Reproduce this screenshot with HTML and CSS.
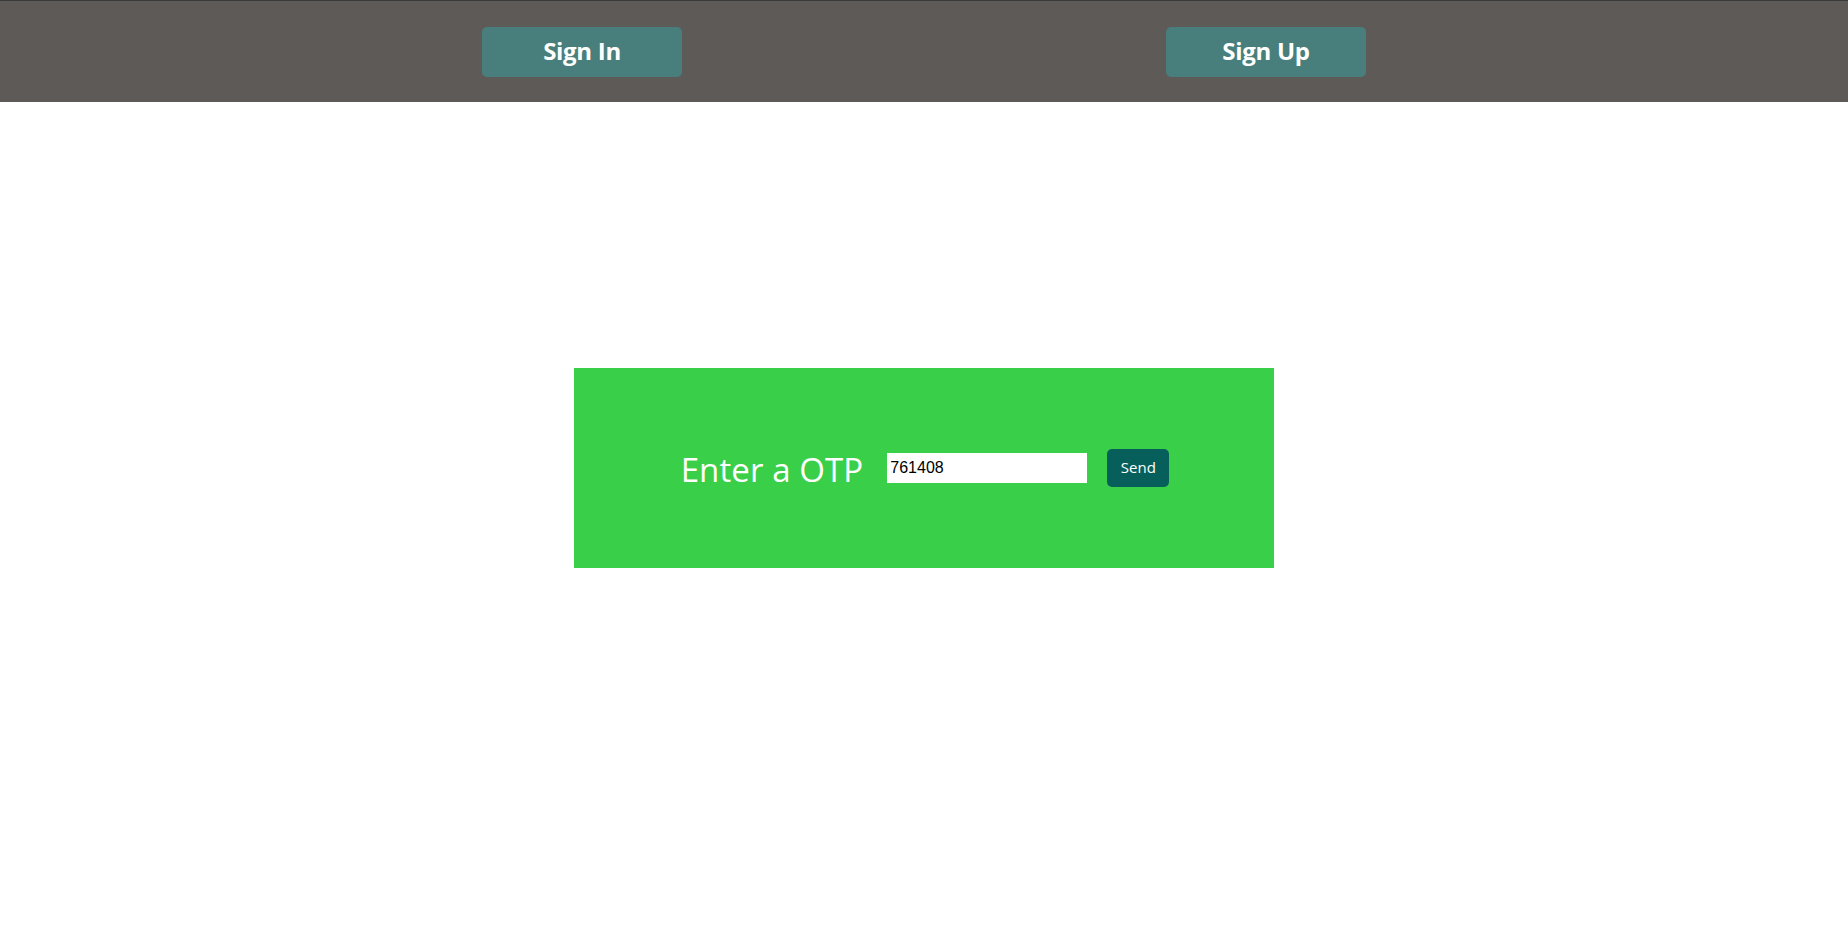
FILE: index.html
```html
<!DOCTYPE html>
<html lang="en">
<head>
<meta charset="utf-8">
<title>OTP</title>
<link rel="stylesheet" href="styles.css">
</head>
<body>
<header class="topbar">
  <nav class="topbar-nav">
    <a class="nav-btn" href="#">Sign In</a>
    <a class="nav-btn" href="#">Sign Up</a>
  </nav>
</header>
<main class="main">
  <section class="otp-card">
    <form class="otp-form">
      <label class="otp-label" for="otp">Enter a OTP</label>
      <input class="otp-input" id="otp" type="text" value="761408">
      <button class="otp-send" type="button">Send</button>
    </form>
  </section>
</main>
</body>
</html>
```

FILE: styles.css
```css
html, body {
  margin: 0;
  padding: 0;
  background: #ffffff;
  font-family: "Open Sans", "Noto Sans", sans-serif;
}

.topbar {
  height: 102px;
  box-sizing: border-box;
  border-top: 1px solid #3a3a3a;
  background: #5e5a58;
}

.topbar-nav {
  display: flex;
  justify-content: center;
  gap: 484px;
  padding-top: 26px;
}

.nav-btn {
  display: flex;
  align-items: center;
  justify-content: center;
  width: 200px;
  height: 50px;
  border-radius: 5px;
  background: #487f7c;
  color: #ffffff;
  font-weight: 700;
  font-size: 24px;
  text-decoration: none;
  letter-spacing: -0.3px;
  padding-bottom: 3px;
  box-sizing: border-box;
}

.main {
  display: flex;
  justify-content: center;
  padding-top: 266px;
}

.otp-card {
  width: 700px;
  height: 200px;
  background: #3acf48;
  display: flex;
  align-items: center;
  justify-content: center;
}

.otp-form {
  display: flex;
  align-items: center;
  margin-left: 2px;
}

.otp-label {
  color: #ffffff;
  font-size: 33px;
  font-weight: 400;
  letter-spacing: 0.1px;
  margin-right: 24px;
  margin-top: 2px;
}

.otp-input {
  width: 200px;
  height: 30px;
  box-sizing: border-box;
  border: none;
  outline: none;
  padding: 0 3px;
  margin: 0 20px 0 0;
  background: #ffffff;
  color: #000000;
  font-family: "Liberation Sans", Arial, sans-serif;
  font-size: 16px;
}

.otp-send {
  width: 62px;
  height: 38px;
  border: none;
  border-radius: 5px;
  background: #075f5b;
  color: #ffffff;
  font-family: "Open Sans", sans-serif;
  font-size: 15px;
  padding: 0 0 2px;
  cursor: pointer;
}
```
